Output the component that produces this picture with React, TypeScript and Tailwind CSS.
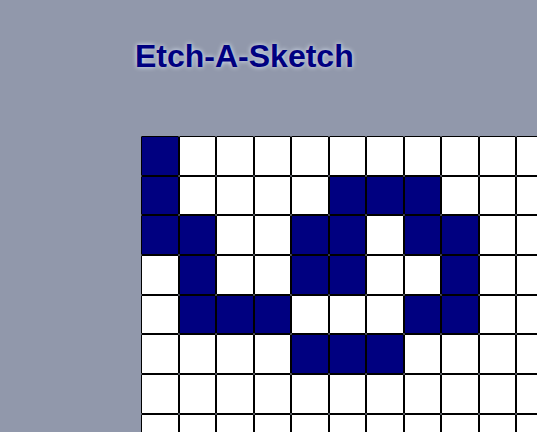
import React from "react";

const filled: Record<number, number[]> = {
  0: [0],
  1: [0, 5, 6, 7],
  2: [0, 1, 4, 5, 7, 8],
  3: [1, 4, 5, 8],
  4: [1, 2, 3, 7, 8],
  5: [4, 5, 6],
};

export default function App() {
  const rows = Array.from({ length: 16 }, (_, r) => r);
  const cols = Array.from({ length: 16 }, (_, c) => c);
  return (
    <div className="w-[537px] h-[432px] overflow-hidden bg-[#9198ab] font-['Liberation_Sans',Arial,sans-serif]">
      <h1 className="pl-[135px] pt-[38px] text-[32px] leading-[37px] font-bold text-[#000080] [text-shadow:0_0_5px_#e4efff]">
        Etch-A-Sketch
      </h1>
      <div className="ml-[141px] mt-[61px] grid w-[600px] grid-cols-[repeat(16,37.5px)]">
        {rows.map((r) =>
          cols.map((c) => (
            <div
              key={`${r}-${c}`}
              className={`h-[39.7px] border border-black rounded-[1px] ${
                filled[r]?.includes(c) ? "bg-[#000080]" : "bg-white"
              }`}
            />
          ))
        )}
      </div>
    </div>
  );
}
